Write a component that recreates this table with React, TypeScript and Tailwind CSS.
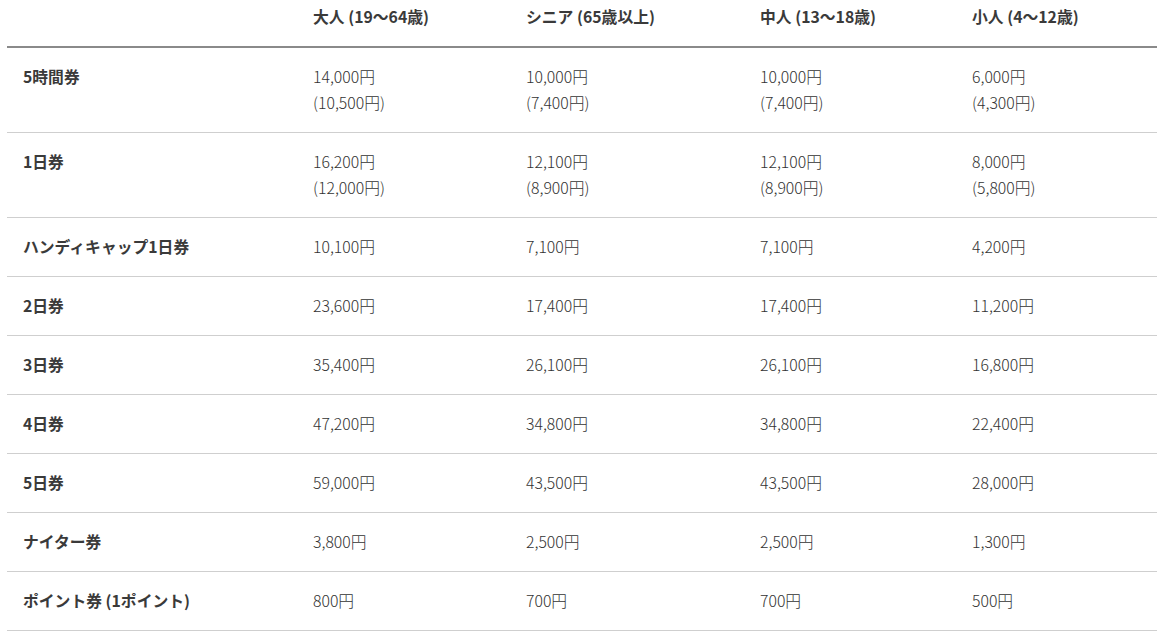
import React from "react";

type Row = { name: string; cells: string[][] };

const headers = ["大人 (19〜64歳)", "シニア (65歳以上)", "中人 (13〜18歳)", "小人 (4〜12歳)"];

const rows: Row[] = [
  { name: "5時間券", cells: [["14,000円", "(10,500円)"], ["10,000円", "(7,400円)"], ["10,000円", "(7,400円)"], ["6,000円", "(4,300円)"]] },
  { name: "1日券", cells: [["16,200円", "(12,000円)"], ["12,100円", "(8,900円)"], ["12,100円", "(8,900円)"], ["8,000円", "(5,800円)"]] },
  { name: "ハンディキャップ1日券", cells: [["10,100円"], ["7,100円"], ["7,100円"], ["4,200円"]] },
  { name: "2日券", cells: [["23,600円"], ["17,400円"], ["17,400円"], ["11,200円"]] },
  { name: "3日券", cells: [["35,400円"], ["26,100円"], ["26,100円"], ["16,800円"]] },
  { name: "4日券", cells: [["47,200円"], ["34,800円"], ["34,800円"], ["22,400円"]] },
  { name: "5日券", cells: [["59,000円"], ["43,500円"], ["43,500円"], ["28,000円"]] },
  { name: "ナイター券", cells: [["3,800円"], ["2,500円"], ["2,500円"], ["1,300円"]] },
  { name: "ポイント券 (1ポイント)", cells: [["800円"], ["700円"], ["700円"], ["500円"]] },
];

const colW = ["w-[290px]", "w-[213px]", "w-[234px]", "w-[212px]", "w-[201px]"];

export default function App() {
  return (
    <div
      className="bg-white min-h-[639px] pl-[7px] pr-[5px] text-[#3a3a3a] text-[15.8px] leading-[26px]"
      style={{ fontFamily: '"Noto Sans CJK JP", "Noto Sans", sans-serif' }}
    >
      <table className="w-[1150px] border-collapse table-fixed">
        <colgroup>
          {colW.map((c, i) => (
            <col key={i} className={c} />
          ))}
        </colgroup>
        <thead>
          <tr className="border-b-2 border-[#8a8a8a]">
            <th className="pl-4 pt-[4px] pb-4 text-left font-bold"></th>
            {headers.map((h) => (
              <th key={h} className="pl-4 pt-[4px] pb-4 text-left font-bold">
                {h}
              </th>
            ))}
          </tr>
        </thead>
        <tbody>
          {rows.map((r) => (
            <tr key={r.name} className="border-b border-[#cfcfcf]">
              <td className="pl-4 py-4 align-top font-bold">{r.name}</td>
              {r.cells.map((c, i) => (
                <td key={i} className="pl-4 py-4 align-top font-light text-[#333]">
                  {c.map((line, j) => (
                    <div key={j}>{line}</div>
                  ))}
                </td>
              ))}
            </tr>
          ))}
        </tbody>
      </table>
    </div>
  );
}
